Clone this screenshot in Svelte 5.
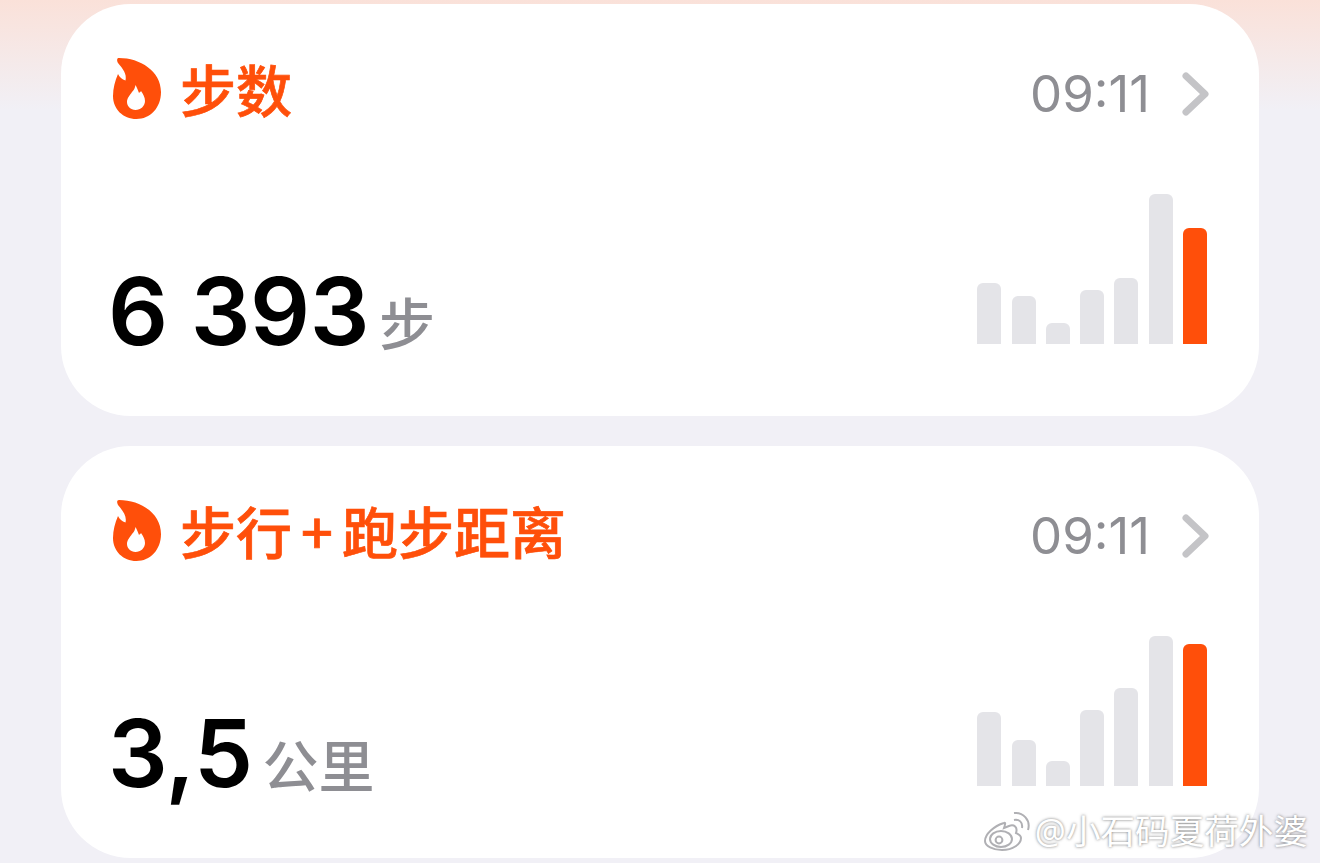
<script lang="ts">
	const cards = [
		{ title: '步数', value: '6 393', unit: '步', bars: [61, 48, 21, 54, 66, 150, 116] },
		{ title: '步行 + 跑步距离', value: '3,5', unit: '公里', bars: [74, 46, 25, 76, 98, 150, 142] }
	];
</script>

<main class="page">
	{#each cards as card}
		<section class="card">
			<header class="head">
				<svg class="flame" viewBox="0 0 50 62" aria-hidden="true">
					<path fill="#ff4f0a" fill-rule="evenodd" d="M7 1C28 1 49 14 49 35C49 51 38 62 24.5 62C11 62 1 52 1 39C1 31 3 24 6 17C7.5 20 10 22.5 13.5 23.5C15 17 11 12 6 6C4.5 3 5 1 7 1ZM23.5 28C25 31 26 33 27 36C28 35 29 34.5 29 34C31 37 33 40 33 44C33 49 28.5 53 23.5 53C18.5 53 15 49 15 45C15 41 18 38 20 35C22 33 23 31 23.5 28Z" />
				</svg>
				<h2 class="title">{card.title}</h2>
				<span class="time">09:11</span>
				<svg class="chev" viewBox="0 0 28 44" aria-hidden="true">
					<path d="M4 4L23 22L4 40" fill="none" stroke="#c4c4c7" stroke-width="7" stroke-linecap="round" stroke-linejoin="round" />
				</svg>
			</header>
			<div class="foot">
				<div class="reading">
					<span class="value">{card.value}</span>
					<span class="unit">{card.unit}</span>
				</div>
				<div class="chart">
					{#each card.bars as h, i}
						<div class="bar" class:bar--now={i === card.bars.length - 1} style="height: {h}px"></div>
					{/each}
				</div>
			</div>
		</section>
	{/each}
</main>

<div class="mark">
	<svg class="weibo" viewBox="0 0 48 40" aria-hidden="true">
		<g fill="none" stroke="#b0b0b4" stroke-width="2">
			<path d="M20 12C10 15 1 23 1 30C1 35 9 39 18 39C29 39 37 33 37 27C37 24 34 23 32 22C34 16 30 13 25 15L20 17C21 14 22 11 20 12Z" fill="#fff" />
			<ellipse cx="17" cy="28" rx="11" ry="8" />
			<circle cx="15" cy="29" r="3.4" />
			<path d="M30 9C35 8 39 11 38 17" />
			<path d="M30 2C39 1 47 9 44 19" />
		</g>
	</svg>
	<span>@小石码夏荷外婆</span>
</div>

<style>
	:global(body) {
		margin: 0;
		background: #f1f0f6;
		overflow: hidden;
	}

	.page {
		height: 863px;
		box-sizing: border-box;
		padding: 4px 61px 0;
		display: flex;
		flex-direction: column;
		gap: 30px;
		background: linear-gradient(180deg, #fae1d9 0, #f1f0f6 110px);
		font-family: 'Inter', 'Noto Sans CJK SC', sans-serif;
	}

	.card {
		height: 412px;
		box-sizing: border-box;
		padding: 53px 52px 72px 51px;
		flex-shrink: 0;
		display: flex;
		flex-direction: column;
		justify-content: space-between;
		background: #fff;
		border-radius: 70px;
	}

	.head {
		display: flex;
		align-items: center;
		height: 62px;
	}

	.flame {
		width: 50px;
		height: 62px;
		margin-right: 18px;
	}

	.title {
		flex: 1;
		margin: 0;
		font-family: 'Noto Sans CJK SC', sans-serif;
		font-size: 56px;
		font-weight: 500;
		line-height: 62px;
		word-spacing: -3.5px;
		-webkit-text-stroke: 0.7px #ff4f0a;
		color: #ff4f0a;
	}

	.time {
		font-size: 51px;
		line-height: 62px;
		color: #8e8e93;
		margin-top: 12px;
		margin-right: 32px;
	}

	.chev {
		width: 28px;
		height: 44px;
		margin-top: 12px;
		margin-right: -3px;
	}

	.foot {
		display: flex;
		align-items: flex-end;
		justify-content: space-between;
	}

	.reading {
		display: flex;
		align-items: baseline;
		gap: 10px;
		margin-bottom: -17px;
		margin-left: -4px;
	}

	.value {
		font-size: 94px;
		font-weight: 600;
		line-height: 100px;
		letter-spacing: -0.5px;
		color: #000;
	}

	.unit {
		font-family: 'Noto Sans CJK SC', sans-serif;
		font-size: 56px;
		font-weight: 500;
		color: #8e8e93;
	}

	.chart {
		display: flex;
		align-items: flex-end;
		gap: 10.3px;
	}

	.bar {
		width: 24px;
		background: #e4e4e8;
		border-radius: 6px 6px 0 0;
	}

	.bar--now {
		background: #ff4f0a;
	}

	.mark {
		position: absolute;
		right: 12px;
		top: 808px;
		display: flex;
		align-items: center;
		gap: 3px;
		font-family: 'Noto Sans', 'Noto Sans CJK SC', sans-serif;
		font-size: 34.6px;
		line-height: 46px;
		color: #fff;
		text-shadow: 0 0 3px rgba(80, 80, 80, 0.8);
	}

	.weibo {
		width: 48px;
		height: 40px;
	}
</style>
